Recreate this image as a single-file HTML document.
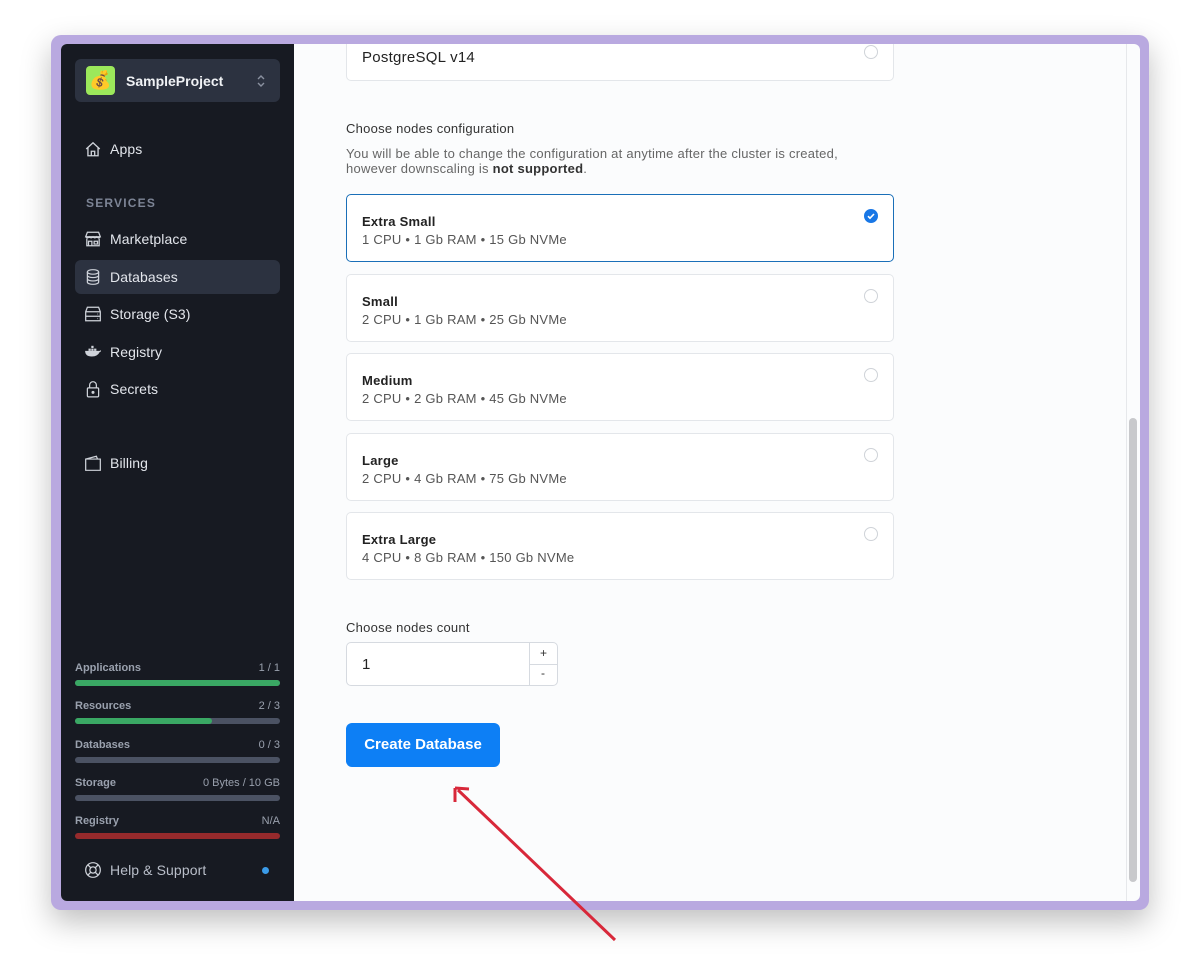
<!DOCTYPE html>
<html><head><meta charset="utf-8"><style>
*{box-sizing:border-box;margin:0;padding:0}
body{width:1200px;height:978px;background:#fff;font-family:"Liberation Sans",sans-serif;position:relative;overflow:hidden}
.frame{position:absolute;left:51px;top:35px;width:1098px;height:875px;background:#b9a9e0;border-radius:10px;box-shadow:0 12px 30px rgba(0,0,0,.25)}
.win{position:absolute;left:61px;top:44px;width:1079px;height:857px;background:#fbfcfd;border-radius:6px;overflow:hidden}
.side{position:absolute;left:0;top:0;width:233px;height:857px;background:#171a22;color:#e6e8ee}
.proj{position:absolute;left:14px;top:15px;width:205px;height:43px;background:#2c3240;border-radius:6px}
.logo{position:absolute;left:11px;top:7px;width:29px;height:29px;background:#9ce85b;border-radius:4px;font-size:18px;text-align:center;line-height:29px}
.proj .n{position:absolute;left:51px;top:14px;font-weight:bold;font-size:14px;color:#f0f2f5}
.nav{position:absolute;left:14px;width:205px;height:34px;border-radius:6px;font-size:14px;color:#e3e6ec;letter-spacing:.1px}
.nav svg{position:absolute;left:9px;top:8px}
.nav span{position:absolute;left:35px;top:9px}
.sec{position:absolute;left:25px;top:152px;font-size:12px;letter-spacing:1.2px;color:#7d8596;font-weight:bold}
.q{position:absolute;left:14px;width:205px;font-size:11px;color:#9aa1ae}
.q b{color:#9aa1ae}.q i{float:right;font-style:normal}
.bar{position:absolute;left:0;top:18px;width:205px;height:6px;border-radius:3px;background:#4b5263}
.main{position:absolute;left:233px;top:0;width:832px;height:857px;letter-spacing:.25px}
.card{position:absolute;left:52px;width:548px;height:68px;background:#fff;border:1px solid #e3e6ea;border-radius:5px}
.card b{position:absolute;left:15px;top:19px;font-size:13px;color:#222}
.card s{position:absolute;left:15px;top:37px;font-size:13px;color:#555;text-decoration:none}
.radio{position:absolute;right:15px;top:14px;width:14px;height:14px;border:1px solid #cfd3d8;border-radius:50%;background:#fff}
</style></head><body>
<div class="frame"></div>
<div class="win">
 <div class="side">
  <div class="proj"><div class="logo">💰</div><div class="n">SampleProject</div>
   <svg style="position:absolute;left:181px;top:14px" width="10" height="16" viewBox="0 0 10 16" fill="none" stroke="#8a91a0" stroke-width="1.4"><path d="M2 6l3-3 3 3M2 10l3 3 3-3"/></svg></div>
  <div class="nav" style="top:88px"><svg width="18" height="18" viewBox="0 0 16 16" fill="none" stroke="#cfd3da" stroke-width="1.2"><path d="M2 8L8 2.5 14 8M3.5 7v7h9V7M6.5 14v-4h3v4"/></svg><span>Apps</span></div>
  <div class="sec">SERVICES</div>
  <div class="nav" style="top:178px"><svg width="18" height="18" viewBox="0 0 16 16" fill="none" stroke="#cfd3da" stroke-width="1.1"><path d="M1.5 6l1.5-4h10l1.5 4zM1.5 6q1.6 2 3.2 0 1.6 2 3.3 0 1.6 2 3.3 0 1.6 2 3.2 0M2.5 7.5V14h11V7.5M4 14v-4h3v4M9 10h3v2.5H9z"/></svg><span>Marketplace</span></div>
  <div class="nav" style="top:216px;background:#2c3240"><svg width="18" height="18" viewBox="0 0 16 16" fill="none" stroke="#cfd3da" stroke-width="1.1"><ellipse cx="8" cy="3.5" rx="5" ry="2"/><path d="M3 3.5v9c0 1.1 2.2 2 5 2s5-.9 5-2v-9M3 6.5c0 1.1 2.2 2 5 2s5-.9 5-2M3 9.5c0 1.1 2.2 2 5 2s5-.9 5-2"/></svg><span>Databases</span></div>
  <div class="nav" style="top:253px"><svg width="18" height="18" viewBox="0 0 16 16" fill="none" stroke="#cfd3da" stroke-width="1.1"><path d="M3 2h10l1.5 4v8h-13V6zM1.5 6h13M1.5 10h13M12 8h.5M12 12h.5"/></svg><span>Storage (S3)</span></div>
  <div class="nav" style="top:291px"><svg width="18" height="18" viewBox="0 0 16 16" fill="#cfd3da"><path d="M1 8h13.5q1-1.5 0.5-1.5-1 0-1 .5H1q0 5 6 5 5 0 7-4z"/><rect x="4" y="5" width="2" height="2"/><rect x="6.5" y="5" width="2" height="2"/><rect x="9" y="5" width="2" height="2"/><rect x="6.5" y="2.5" width="2" height="2"/></svg><span>Registry</span></div>
  <div class="nav" style="top:328px"><svg width="18" height="18" viewBox="0 0 16 16" fill="none" stroke="#cfd3da" stroke-width="1.1"><rect x="3" y="7" width="10" height="8" rx="1"/><path d="M5 7V4.5a3 3 0 016 0V7"/><circle cx="8" cy="11" r=".8" fill="#cfd3da"/></svg><span>Secrets</span></div>
  <div class="nav" style="top:402px"><svg width="18" height="18" viewBox="0 0 16 16" fill="none" stroke="#cfd3da" stroke-width="1.1"><path d="M1.5 4.5h13v10h-13zM1.5 4.5L11 2l1 2.5"/></svg><span>Billing</span></div>
  <div class="q" style="top:618px"><b>Applications</b><i>1 / 1</i><div class="bar"><div style="width:100%;height:6px;border-radius:3px;background:#3aa864"></div></div></div>
  <div class="q" style="top:656px"><b>Resources</b><i>2 / 3</i><div class="bar"><div style="width:67%;height:6px;border-radius:3px;background:#3aa864"></div></div></div>
  <div class="q" style="top:695px"><b>Databases</b><i>0 / 3</i><div class="bar"></div></div>
  <div class="q" style="top:733px"><b>Storage</b><i>0 Bytes / 10 GB</i><div class="bar"></div></div>
  <div class="q" style="top:771px"><b>Registry</b><i>N/A</i><div class="bar" style="background:#962a2c"></div></div>
  <div class="nav" style="top:809px;color:#b9bec9"><svg width="18" height="18" viewBox="0 0 16 16" fill="none" stroke="#cfd3da" stroke-width="1.1"><circle cx="8" cy="8" r="6.5"/><circle cx="8" cy="8" r="2.8"/><path d="M3.4 3.4l2.6 2.6M12.6 3.4L10 6M3.4 12.6L6 10M12.6 12.6L10 10"/></svg><span>Help &amp; Support</span>
   <div style="position:absolute;left:187px;top:14px;width:7px;height:7px;border-radius:50%;background:#3b9be8"></div></div>
 </div>
 <div class="main">
  <div class="card" style="top:-20px;height:57px"><span style="position:absolute;left:15px;top:24px;font-size:15px;color:#222">PostgreSQL v14</span><div class="radio" style="top:20px"></div></div>
  <div style="position:absolute;left:52px;top:77px;font-size:13px;color:#333">Choose nodes configuration</div>
  <div style="position:absolute;left:52px;top:102px;font-size:13px;color:#666;line-height:15px">You will be able to change the configuration at anytime after the cluster is created,<br>however downscaling is <b style="color:#333">not supported</b>.</div>
  <div class="card" style="top:150px;border:1.5px solid #1a6fb8"><b>Extra Small</b><s>1 CPU • 1 Gb RAM • 15 Gb NVMe</s><div class="radio" style="background:#1877e6;border-color:#1877e6"><svg width="14" height="14" viewBox="0 0 14 14" style="position:absolute;left:-1px;top:-1px"><path d="M4 7.2l2 2 4-4.2" fill="none" stroke="#fff" stroke-width="1.6"/></svg></div></div>
  <div class="card" style="top:230px"><b>Small</b><s>2 CPU • 1 Gb RAM • 25 Gb NVMe</s><div class="radio"></div></div>
  <div class="card" style="top:309px"><b>Medium</b><s>2 CPU • 2 Gb RAM • 45 Gb NVMe</s><div class="radio"></div></div>
  <div class="card" style="top:389px"><b>Large</b><s>2 CPU • 4 Gb RAM • 75 Gb NVMe</s><div class="radio"></div></div>
  <div class="card" style="top:468px"><b>Extra Large</b><s>4 CPU • 8 Gb RAM • 150 Gb NVMe</s><div class="radio"></div></div>
  <div style="position:absolute;left:52px;top:576px;font-size:13px;color:#333">Choose nodes count</div>
  <div style="position:absolute;left:52px;top:598px;width:212px;height:44px;background:#fff;border:1px solid #d6dae0;border-radius:5px">
   <span style="position:absolute;left:15px;top:13px;font-size:15px;color:#222">1</span>
   <div style="position:absolute;left:182px;top:0;width:1px;height:42px;background:#d6dae0"></div>
   <div style="position:absolute;left:182px;top:21px;width:29px;height:1px;background:#d6dae0"></div>
   <span style="position:absolute;left:193px;top:3px;font-size:12px;color:#333">+</span>
   <span style="position:absolute;left:194px;top:23px;font-size:12px;color:#333">-</span>
  </div>
  <div style="position:absolute;left:52px;top:679px;width:154px;height:44px;background:#0d7ff5;border-radius:6px;color:#fff;font-weight:bold;font-size:15px;text-align:center;line-height:44px;letter-spacing:0">Create Database</div>
 </div>
 <div style="position:absolute;left:1065px;top:0;width:1px;height:857px;background:#e6e8eb"></div>
 <div style="position:absolute;left:1068px;top:374px;width:8px;height:464px;border-radius:4px;background:#c8c9cc"></div>
</div>
<svg style="position:absolute;left:0;top:0" width="1200" height="978"><path d="M615 940L458 790M455 788l0 14M455 788l14 1" fill="none" stroke="#d8283a" stroke-width="3"/></svg>
</body></html>
